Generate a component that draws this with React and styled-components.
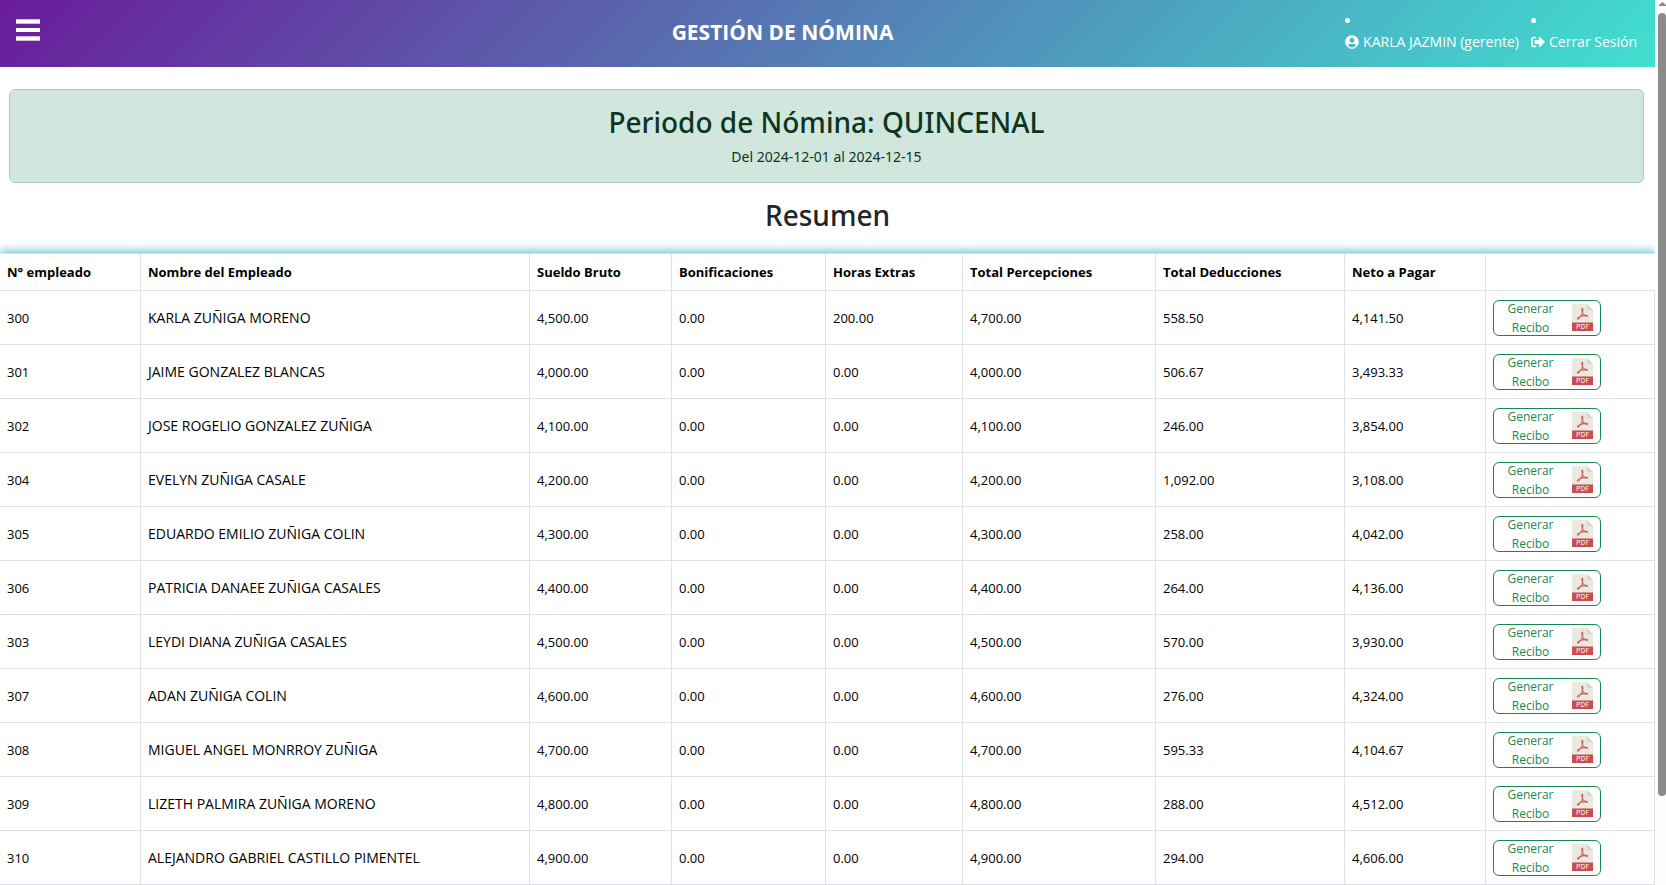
import React from "react";
import styled, { createGlobalStyle } from "styled-components";
import { FaUserCircle, FaSignOutAlt } from "react-icons/fa";

const GlobalStyle = createGlobalStyle`
  *, *::before, *::after { box-sizing: border-box; }
  body {
    margin: 0;
    background: #fff;
    color: #212529;
    font-family: "Open Sans", "Noto Sans", sans-serif;
    font-size: 13px;
    line-height: 20px;
  }
`;

const Shell = styled.div`
  display: flex;
  height: 100vh;
  overflow: hidden;
`;

const Page = styled.div`
  flex: 1;
  min-width: 0;
  overflow: hidden;
`;

const ScrollTrack = styled.div`
  flex: none;
  width: 11px;
  padding: 2px 0 0 3px;
  display: flex;
  flex-direction: column;
  gap: 7px;
  background: #fcfcfc;
`;

const ScrollArrow = styled.svg`
  flex: none;
  display: block;
  width: 9px;
  height: 4px;
  fill: #8a8a8a;
`;

const ScrollThumb = styled.div`
  flex: none;
  height: calc(100% - 100px);
  border-radius: 4px;
  background: #8b8b8b;
`;

const TopBar = styled.header`
  display: grid;
  grid-template-columns: 204px 1fr auto;
  height: 67px;
  padding: 0 18px 0 16px;
  color: #fff;
  background: linear-gradient(135deg, #6a1b9a, #40e0d0);
`;

const MenuButton = styled.button`
  justify-self: start;
  align-self: start;
  margin: 19px 0 0;
  padding: 0;
  border: 0;
  background: none;
  color: inherit;

  svg { display: block; }
`;

const Title = styled.h1`
  margin: 16px 0 0;
  font-size: 21px;
  line-height: 32px;
  font-weight: 700;
  text-align: center;
`;

const UserNav = styled.ul`
  display: flex;
  gap: 12px;
  margin: 10px 0 0;
  padding: 0;
  list-style: none;
`;

const UserItem = styled.li`
  &::before {
    content: "";
    display: block;
    width: 5px;
    height: 5px;
    margin: 8px 0 9px;
    border-radius: 50%;
    background: #fff;
  }
`;

const UserLink = styled.a`
  display: flex;
  align-items: center;
  gap: 4px;
  color: #fff;
  font-size: 14px;
  text-decoration: none;
  white-space: nowrap;
`;

const PeriodAlert = styled.section`
  margin: 22px 11px 0 9px;
  padding: 15px 16px;
  border: 1px solid #a3cfbb;
  border-radius: 6px;
  background: #d1e7dd;
  color: #0a3622;
  text-align: center;
`;

const Heading = styled.h2`
  margin: 0;
  font-family: "Noto Sans", "Open Sans", sans-serif;
  font-size: 28px;
  line-height: 34px;
  font-weight: 500;
`;

const PeriodDates = styled.p`
  margin: 8px 0 0;
  font-family: "Noto Sans", "Open Sans", sans-serif;
  font-size: 14px;
`;

const SummaryHeading = styled(Heading)`
  margin: 15px 0 21px;
  text-align: center;
`;

const PayrollTable = styled.table`
  width: 100%;
  table-layout: fixed;
  border-collapse: separate;
  border-spacing: 0;
  border-top: 1px solid #dee2e6;
  color: #000;
  background: #fff;
  box-shadow: 0 0 10px 1px #4ab0d6;
`;

const Th = styled.th`
  height: 37px;
  padding: 0 7px;
  border-bottom: 1px solid #dee2e6;
  border-right: 1px solid #dee2e6;
  text-align: left;
  font-weight: 700;
  white-space: nowrap;

  &:last-child { border-right: 0; }
`;

const Td = styled.td`
  height: 54px;
  padding: 0 7px;
  border-bottom: 1px solid #dee2e6;
  border-right: 1px solid #dee2e6;
`;

const NameCell = styled(Td)`
  font-size: 14px;
`;

const ReceiptButton = styled.button`
  display: flex;
  align-items: center;
  width: 108px;
  height: 36px;
  padding: 0 7px 0 3px;
  border: 1px solid #198754;
  border-radius: 6px;
  background: #fff;
  color: #198754;
  font-family: inherit;
  font-size: 12px;
  line-height: 19px;
  text-align: center;

  span { flex: 1; padding: 0 16px 0 8px; }
  svg { flex: none; }
`;

const PdfIcon = () => (
  <svg width="21" height="27" viewBox="0 0 21 27" aria-hidden="true">
    <path d="M0 0h15l6 6v13H0z" fill="#e9e9e0" />
    <path d="M15 0l6 6h-6z" fill="#d9d7ca" />
    <path
      d="M10.2 3.6c1.4 2.2.4 5.600-1.600 8.600-1 1.600-2 2.800-3 3.200M10 4c-.4 2.600.4 5.400 2.200 7 .8.8 2.200 1.600 3.400 1.400M5.200 15.200c.4-1.800 3.800-3 6.200-3.600 1.800-.4 4.200-.2 4.400.6"
      fill="none"
      stroke="#cc4b4c"
      strokeOpacity="0.85"
      strokeWidth="1.1"
    />
    <path d="M0 18.500h21V27H0z" fill="#cc4b4c" />
    <text x="10.5" y="25" textAnchor="middle" fontSize="7" fontWeight="600" fill="#f6dcdc">PDF</text>
  </svg>
);

const columns = [
  ["N° empleado", 141],
  ["Nombre del Empleado", 389],
  ["Sueldo Bruto", 142],
  ["Bonificaciones", 154],
  ["Horas Extras", 137],
  ["Total Percepciones", 193],
  ["Total Deducciones", 189],
  ["Neto a Pagar", 141],
  ["", 169],
];

const employees = [
  ["300", "KARLA ZUÑIGA MORENO", "4,500.00", "0.00", "200.00", "4,700.00", "558.50", "4,141.50"],
  ["301", "JAIME GONZALEZ BLANCAS", "4,000.00", "0.00", "0.00", "4,000.00", "506.67", "3,493.33"],
  ["302", "JOSE ROGELIO GONZALEZ ZUÑIGA", "4,100.00", "0.00", "0.00", "4,100.00", "246.00", "3,854.00"],
  ["304", "EVELYN ZUÑIGA CASALE", "4,200.00", "0.00", "0.00", "4,200.00", "1,092.00", "3,108.00"],
  ["305", "EDUARDO EMILIO ZUÑIGA COLIN", "4,300.00", "0.00", "0.00", "4,300.00", "258.00", "4,042.00"],
  ["306", "PATRICIA DANAEE ZUÑIGA CASALES", "4,400.00", "0.00", "0.00", "4,400.00", "264.00", "4,136.00"],
  ["303", "LEYDI DIANA ZUÑIGA CASALES", "4,500.00", "0.00", "0.00", "4,500.00", "570.00", "3,930.00"],
  ["307", "ADAN ZUÑIGA COLIN", "4,600.00", "0.00", "0.00", "4,600.00", "276.00", "4,324.00"],
  ["308", "MIGUEL ANGEL MONRROY ZUÑIGA", "4,700.00", "0.00", "0.00", "4,700.00", "595.33", "4,104.67"],
  ["309", "LIZETH PALMIRA ZUÑIGA MORENO", "4,800.00", "0.00", "0.00", "4,800.00", "288.00", "4,512.00"],
  ["310", "ALEJANDRO GABRIEL CASTILLO PIMENTEL", "4,900.00", "0.00", "0.00", "4,900.00", "294.00", "4,606.00"],
];

export default function App() {
  return (
    <Shell>
      <GlobalStyle />
      <Page>
        <TopBar>
          <MenuButton type="button" aria-label="Menú">
            <svg width="24" height="22" viewBox="0 0 24 22" fill="currentColor">
              <rect y="0.300" width="24" height="4.400" />
              <rect y="9" width="24" height="4" />
              <rect y="17.300" width="24" height="4.400" />
            </svg>
          </MenuButton>
          <Title>GESTIÓN DE NÓMINA</Title>
          <UserNav>
            <UserItem>
              <UserLink href="#perfil"><FaUserCircle size={14} />KARLA JAZMIN (gerente)</UserLink>
            </UserItem>
            <UserItem>
              <UserLink href="#salir"><FaSignOutAlt size={14} />Cerrar Sesión</UserLink>
            </UserItem>
          </UserNav>
        </TopBar>
        <main>
          <PeriodAlert>
            <Heading>Periodo de Nómina: QUINCENAL</Heading>
            <PeriodDates>Del 2024-12-01 al 2024-12-15</PeriodDates>
          </PeriodAlert>
          <SummaryHeading>Resumen</SummaryHeading>
          <PayrollTable>
            <colgroup>
              {columns.map(([label, width]) => <col key={label} width={width} />)}
            </colgroup>
            <thead>
              <tr>{columns.map(([label]) => <Th key={label} scope="col">{label}</Th>)}</tr>
            </thead>
            <tbody>
              {employees.map(([id, name, ...amounts]) => (
                <tr key={id}>
                  <Td>{id}</Td>
                  <NameCell>{name}</NameCell>
                  {amounts.map((value, i) => <Td key={i}>{value}</Td>)}
                  <Td>
                    <ReceiptButton type="button">
                      <span>Generar Recibo</span>
                      <PdfIcon />
                    </ReceiptButton>
                  </Td>
                </tr>
              ))}
            </tbody>
          </PayrollTable>
        </main>
      </Page>
      <ScrollTrack aria-hidden="true">
        <ScrollArrow viewBox="0 0 9 4"><path d="M4.500 0L9 4H0z" /></ScrollArrow>
        <ScrollThumb />
      </ScrollTrack>
    </Shell>
  );
}
